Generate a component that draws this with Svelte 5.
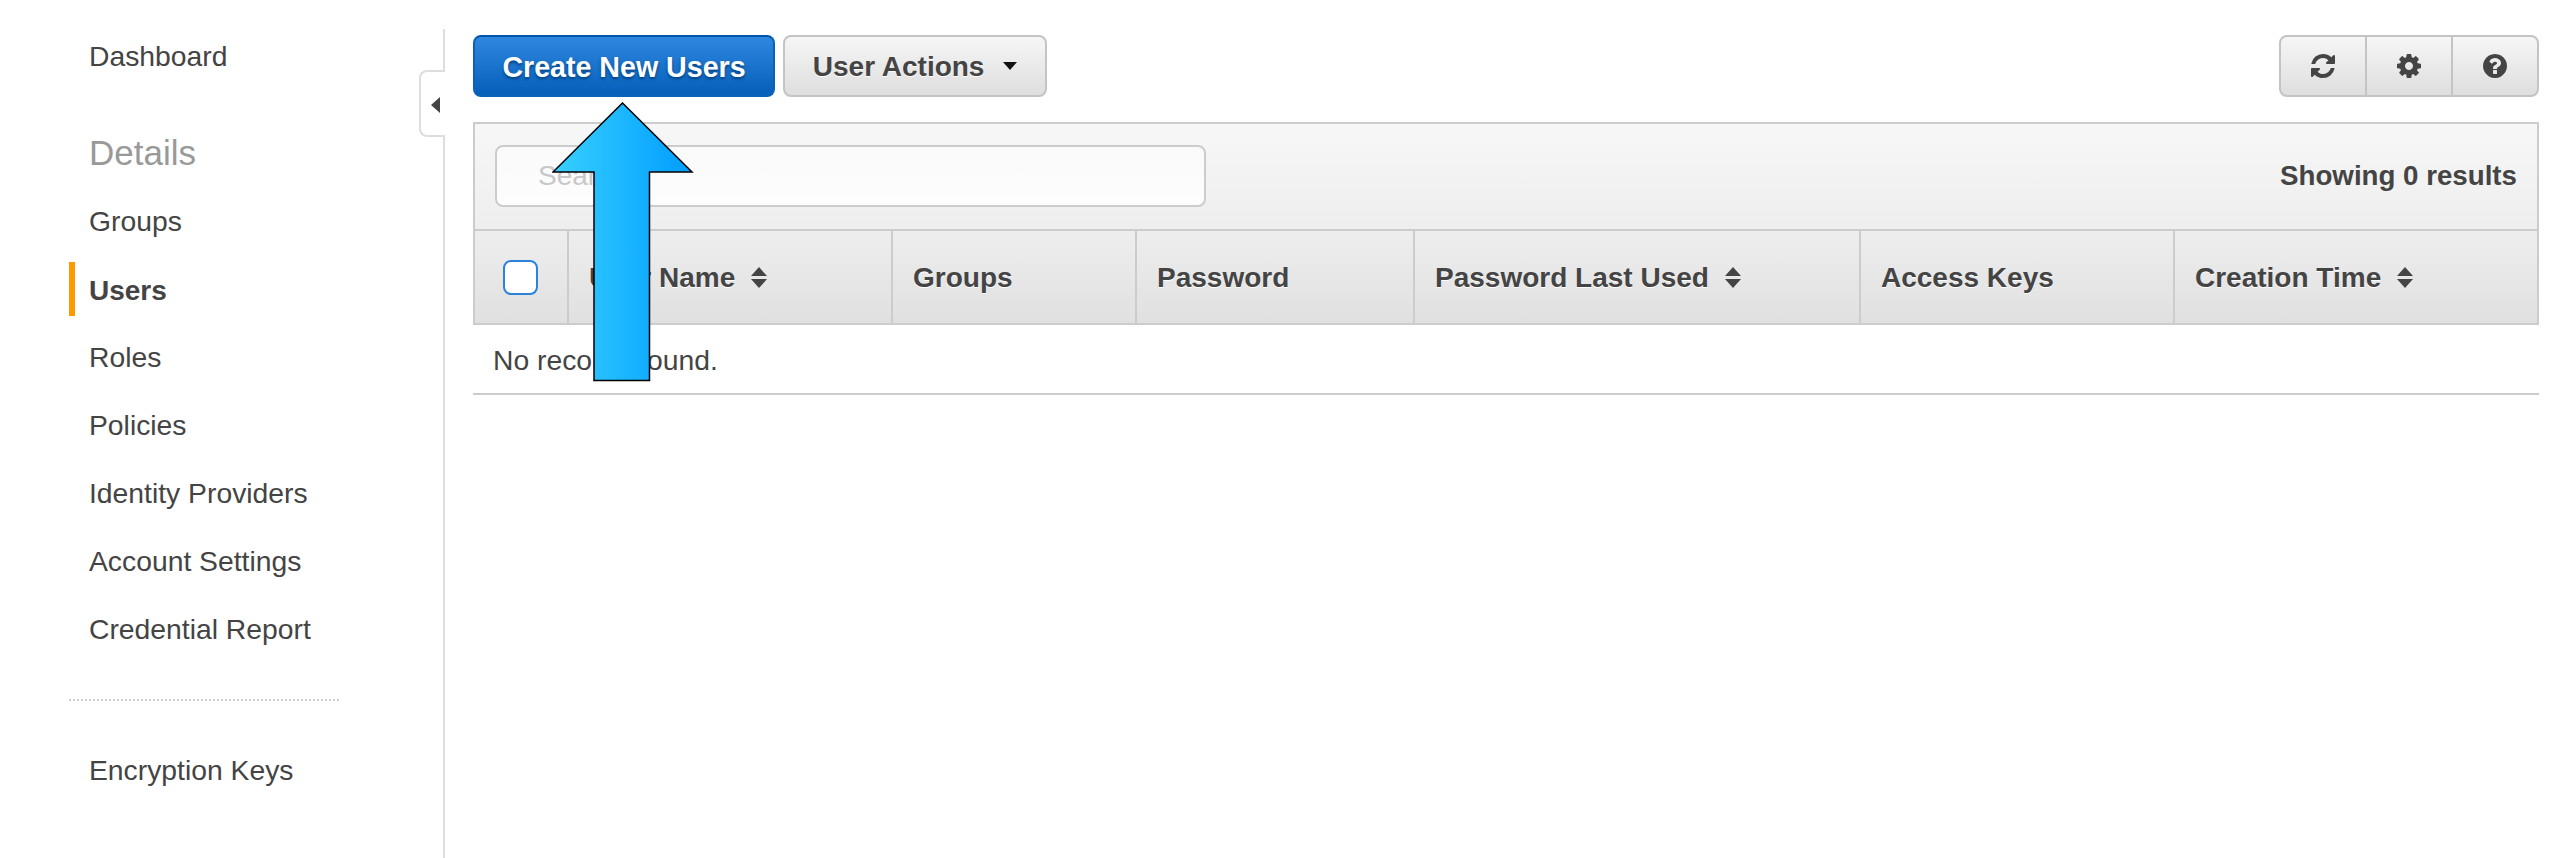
<script>
  const links = ['Groups', 'Users', 'Roles', 'Policies', 'Identity Providers', 'Account Settings', 'Credential Report'];
  const columns = [
    { label: 'User Name', sort: true },
    { label: 'Groups' },
    { label: 'Password' },
    { label: 'Password Last Used', sort: true },
    { label: 'Access Keys' },
    { label: 'Creation Time', sort: true }
  ];
</script>

<div class="page">
  <nav class="sidebar">
    <a class="link">Dashboard</a>
    <h2>Details</h2>
    {#each links as link}
      <a class="link" class:active={link === 'Users'}>{link}</a>
    {/each}
    <div class="dots"></div>
    <a class="link">Encryption Keys</a>
  </nav>

  <main class="content">
    <button class="collapse" aria-label="Collapse">
      <svg width="9" height="16" viewBox="0 0 9 16"><path d="M9 0v16L0 8z" fill="#444" /></svg>
    </button>

    <div class="actions">
      <button class="btn primary">Create New Users</button>
      <button class="btn secondary">User Actions <span class="caret"></span></button>
      <div class="tools">
        <button class="tool" aria-label="Refresh">
          <svg width="28" height="28" viewBox="0 0 1792 1792"><path d="M1639 1056q0 5-1 7-64 268-268 434.5t-478 166.5q-146 0-282.5-55t-243.5-157l-129 129q-19 19-45 19t-45-19-19-45v-448q0-26 19-45t45-19h448q26 0 45 19t19 45-19 45l-137 137q71 66 161 102t187 36q134 0 250-65t186-179q11-17 53-117 8-23 30-23h192q13 0 22.5 9.5t9.5 22.5zm25-800v448q0 26-19 45t-45 19h-448q-26 0-45-19t-19-45 19-45l138-138q-148-137-349-137-134 0-250 65t-186 179q-11 17-53 117-8 23-30 23h-199q-13 0-22.5-9.5t-9.5-22.5v-7q65-268 270-434.5t480-166.5q146 0 284 55.5t245 156.5l130-129q19-19 45-19t45 19 19 45z" /></svg>
        </button>
        <button class="tool" aria-label="Settings">
          <svg width="28" height="28" viewBox="0 0 1792 1792"><path d="M1152 896q0-106-75-181t-181-75-181 75-75 181 75 181 181 75 181-75 75-181zm512-109v222q0 12-8 23t-20 13l-185 28q-19 54-39 91 35 50 107 138 10 12 10 25t-9 23q-27 37-99 108t-94 71q-12 0-26-9l-138-108q-44 23-91 38-16 136-29 186-7 28-36 28h-222q-14 0-24.5-8.5t-11.5-21.5l-28-184q-49-16-90-37l-141 107q-10 9-25 9-14 0-25-11-126-114-165-168-7-10-7-23 0-12 8-23 15-21 51-66.5t54-70.5q-27-50-41-99l-183-27q-13-2-21-12.5t-8-23.5v-222q0-12 8-23t19-13l186-28q14-46 39-92-40-57-107-138-10-12-10-24 0-10 9-23 26-36 98.5-107.5t94.5-71.5q13 0 26 10l138 107q44-23 91-38 16-136 29-186 7-28 36-28h222q14 0 24.5 8.5t11.5 21.5l28 184q49 16 90 37l142-107q9-9 24-9 13 0 25 10 129 119 165 170 7 8 7 22 0 12-8 23-15 21-51 66.5t-54 70.5q26 50 41 98l183 28q13 2 21 12.5t8 23.5z" /></svg>
        </button>
        <button class="tool" aria-label="Help">
          <svg width="28" height="28" viewBox="0 0 1792 1792"><path d="M1024 1376v-192q0-14-9-23t-23-9h-192q-14 0-23 9t-9 23v192q0 14 9 23t23 9h192q14 0 23-9t9-23zm256-672q0-88-55.5-163t-138.5-116-170-41q-243 0-371 213-15 24 8 42l132 100q7 6 19 6 16 0 25-12 53-68 86-92 34-24 86-24 48 0 85.5 26t37.5 59q0 38-20 61t-68 45q-63 28-115.5 86.5t-52.5 125.5v36q0 14 9 23t23 9h192q14 0 23-9t9-23q0-19 21.5-49.5t54.5-49.5q32-18 49-28.5t46-35 44.5-48 28-60.5 12.5-81zm384 192q0 209-103 385.5t-279.5 279.5-385.5 103-385.5-103-279.5-279.5-103-385.5 103-385.5 279.5-279.5 385.5-103 385.5 103 279.5 279.5 103 385.5z" /></svg>
        </button>
      </div>
    </div>

    <div class="toolbar">
      <input class="search" placeholder="Search" />
      <strong>Showing 0 results</strong>
    </div>

    <div class="head">
      <div class="cell check"><span class="checkbox"></span></div>
      {#each columns as col}
        <div class="cell">
          {col.label}
          {#if col.sort}
            <svg class="sort" width="16" height="21" viewBox="0 0 16 21"><path d="M8 0l8 9H0zM0 12h16l-8 9z" fill="#444" /></svg>
          {/if}
        </div>
      {/each}
    </div>
    <div class="empty">No records found.</div>

    <svg class="arrow" width="143" height="281" viewBox="0 0 143 281">
      <defs>
        <linearGradient id="arrowFill" x1="0" y1="0" x2="1" y2="0">
          <stop offset="0" stop-color="#38d0ff" />
          <stop offset="1" stop-color="#009dff" />
        </linearGradient>
      </defs>
      <path d="M70.5 1L140 70H97.5V278.5H42V70H1Z" fill="url(#arrowFill)" stroke="#000" stroke-width="1.5" />
    </svg>
  </main>
</div>

<style>
  :global(body) {
    margin: 0;
    background: #fff;
  }

  .page {
    display: flex;
    height: 858px;
    overflow: hidden;
    font-family: "Liberation Sans", Arial, sans-serif;
    font-size: 28.3px;
    color: #444;
  }

  .sidebar {
    box-sizing: border-box;
    width: 443px;
    padding: 22px 0 0 69px;
    flex: none;
  }

  .link {
    display: block;
    width: 270px;
    box-sizing: border-box;
    height: 68px;
    line-height: 68px;
    padding-left: 20px;
    position: relative;
  }

  .link.active {
    font-weight: bold;
    font-size: 28px;
    line-height: 71px;
  }

  .link.active::before {
    content: '';
    position: absolute;
    left: 0;
    top: 7px;
    width: 6px;
    height: 54px;
    background: #f90;
  }

  h2 {
    margin: 29px 0 0;
    padding-left: 20px;
    height: 68px;
    line-height: 68px;
    font-size: 35px;
    font-weight: normal;
    color: #999;
  }

  .dots {
    width: 270px;
    margin: 36px 0 35px;
    border-top: 2px dotted #ccc;
  }

  .content {
    position: relative;
    flex: 1;
    margin-top: 29px;
    padding: 6px 17px 0 28px;
    border-left: 2px solid #ddd;
  }

  .collapse {
    position: absolute;
    left: -26px;
    top: 41px;
    box-sizing: border-box;
    width: 26px;
    height: 67px;
    padding: 2px 0 0 10px;
    display: flex;
    align-items: center;
    background: #fff;
    border: 2px solid #ddd;
    border-right: none;
    border-radius: 8px 0 0 8px;
  }

  .actions {
    display: flex;
    gap: 8px;
    height: 62px;
    margin-bottom: 25px;
  }

  .btn {
    box-sizing: border-box;
    height: 62px;
    font: bold 28px "Liberation Sans", Arial, sans-serif;
    border-radius: 8px;
    padding: 2px 0 0;
  }

  .primary {
    width: 302px;
    font-size: 28.6px;
    color: #fff;
    background: linear-gradient(#2f87e0, #055fb8);
    border: 2px solid #0a62b8;
    border-top-color: #0355ab;
    text-shadow: 0 2px 3px #03407f;
  }

  .secondary {
    width: 264px;
    color: #444;
    background: linear-gradient(#f6f6f6, #dedede);
    border: 2px solid #c4c4c4;
    text-shadow: 0 1px 0 #fff;
  }

  .caret {
    display: inline-block;
    margin-left: 11px;
    vertical-align: 6px;
    border-style: solid;
    border-width: 8px 7px 0;
    border-color: #111 transparent transparent;
  }

  .tools {
    display: flex;
    margin-left: auto;
    box-sizing: border-box;
    width: 260px;
    border: 2px solid #c4c4c4;
    border-radius: 8px;
    background: linear-gradient(#f6f6f6, #dedede);
  }

  .tool {
    flex: 1;
    display: flex;
    align-items: center;
    justify-content: center;
    padding: 0;
    background: none;
    border: none;
    border-right: 2px solid #c4c4c4;
  }

  .tool:last-child {
    border-right: none;
  }

  .tool svg {
    fill: #444;
  }

  .toolbar {
    box-sizing: border-box;
    height: 109px;
    display: flex;
    align-items: center;
    justify-content: space-between;
    padding: 0 20px 1px;
    background: linear-gradient(#f7f7f7, #eee);
    border: 2px solid #ccc;
  }

  .toolbar strong {
    font-size: 27.7px;
  }

  .search {
    box-sizing: border-box;
    width: 711px;
    height: 62px;
    padding: 0 0 0 41px;
    font: 28px "Liberation Sans", Arial, sans-serif;
    background: linear-gradient(#fafafa, #fdfdfd);
    border: 2px solid #ccc;
    border-radius: 8px;
  }

  .search::placeholder {
    color: #c8c8c8;
  }

  .head {
    box-sizing: border-box;
    display: grid;
    grid-template-columns: 94px 324px 244px 278px 446px 314px 1fr;
    height: 94px;
    background: linear-gradient(#eee, #e0e0e0);
    border: 2px solid #ccc;
    border-top: none;
    font-size: 28px;
    font-weight: bold;
    text-shadow: 0 1px 0 #fff;
  }

  .cell {
    display: flex;
    align-items: center;
    padding: 1px 0 0 20px;
    border-right: 2px solid #ccc;
  }

  .cell:last-child {
    border-right: none;
  }

  .check {
    padding: 0 0 0 28px;
  }

  .checkbox {
    box-sizing: border-box;
    width: 35px;
    height: 35px;
    background: #fff;
    border: 2px solid #2b82dc;
    border-radius: 8px;
  }

  .sort {
    margin-left: 16px;
  }

  .empty {
    box-sizing: border-box;
    height: 70px;
    line-height: 70px;
    padding-left: 20px;
    border-bottom: 2px solid #ccc;
  }

  .arrow {
    position: absolute;
    left: 107px;
    top: 73px;
  }
</style>
